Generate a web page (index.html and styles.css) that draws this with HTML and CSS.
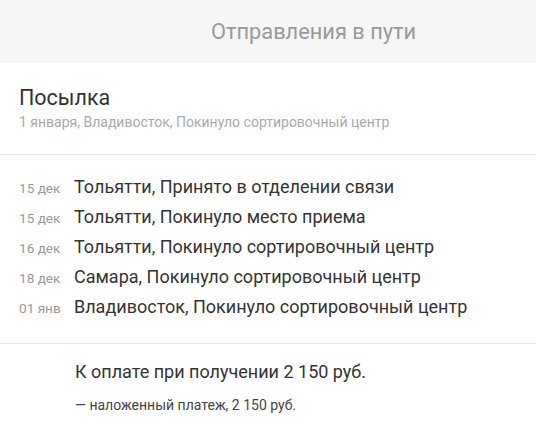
FILE: index.html
```html
<!DOCTYPE html>
<html lang="ru">
<head>
<meta charset="utf-8">
<link rel="stylesheet" href="styles.css">
</head>
<body>
<div class="page">
  <header class="header">
    <h1 class="header-title">Отправления в пути</h1>
  </header>
  <section class="parcel">
    <div class="parcel-name">Посылка</div>
    <div class="parcel-status">1 января, Владивосток, Покинуло сортировочный центр</div>
  </section>
  <section class="history">
    <div class="row"><span class="date">15 дек</span><span class="event">Тольятти, Принято в отделении связи</span></div>
    <div class="row"><span class="date">15 дек</span><span class="event">Тольятти, Покинуло место приема</span></div>
    <div class="row"><span class="date">16 дек</span><span class="event">Тольятти, Покинуло сортировочный центр</span></div>
    <div class="row"><span class="date">18 дек</span><span class="event">Самара, Покинуло сортировочный центр</span></div>
    <div class="row"><span class="date">01 янв</span><span class="event">Владивосток, Покинуло сортировочный центр</span></div>
  </section>
  <section class="payment">
    <div class="payment-total">К оплате при получении 2 150 руб.</div>
    <div class="payment-detail">— наложенный платеж, 2 150 руб.</div>
  </section>
</div>
</body>
</html>
```
FILE: styles.css
```css
* { box-sizing: border-box; margin: 0; padding: 0; }
html, body { background: #fff; }
body { font-family: Roboto, "Noto Sans", sans-serif; color: #333; }
.page { width: 536px; }
.header {
  background: #f6f6f6;
  height: 63px;
  display: flex;
  align-items: center;
  padding-left: 211px;
}
.header-title {
  font-weight: 400;
  font-size: 21.8px;
  color: #999;
  line-height: 26px;
}
.parcel {
  padding: 22px 19px 0;
  height: 92px;
  border-bottom: 1px solid #e6e6e6;
}
.parcel-name { font-size: 21.5px; line-height: 26px; color: #333; }
.parcel-status { font-size: 14px; line-height: 18px; color: #aaa; margin-top: 2px; }
.history {
  padding: 17px 0 21px 19px;
  border-bottom: 1px solid #e6e6e6;
}
.row { display: flex; align-items: baseline; height: 30px; line-height: 30px; }
.date { width: 55px; font-size: 13.6px; color: #999; }
.event { font-size: 18px; color: #333; }
.payment { padding: 16px 0 0 75px; }
.payment-total { font-size: 18px; line-height: 24px; color: #333; }
.payment-detail { font-size: 14px; line-height: 18px; color: #444; margin-top: 12px; }
```
